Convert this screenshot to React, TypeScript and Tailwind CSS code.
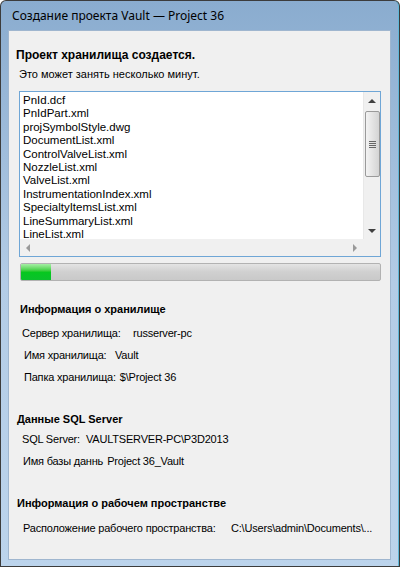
import React from "react";

const files = [
  "PnId.dcf",
  "PnIdPart.xml",
  "projSymbolStyle.dwg",
  "DocumentList.xml",
  "ControlValveList.xml",
  "NozzleList.xml",
  "ValveList.xml",
  "InstrumentationIndex.xml",
  "SpecialtyItemsList.xml",
  "LineSummaryList.xml",
  "LineList.xml",
];

const font = { fontFamily: '"Liberation Sans", Arial, sans-serif' };

function Arrow({ dir }: { dir: "up" | "down" | "left" | "right" }) {
  const pts = {
    up: "0,4 4,0 8,4",
    down: "0,0 8,0 4,4",
    left: "4,0 4,8 0,4",
    right: "0,0 0,8 4,4",
  }[dir];
  const vert = dir === "up" || dir === "down";
  return (
    <svg width={vert ? 8 : 4} height={vert ? 4 : 8} viewBox={vert ? "0 0 8 4" : "0 0 4 8"}>
      <polygon points={pts} fill={vert ? "#404040" : "#9a9a9a"} />
    </svg>
  );
}

function InfoRow({ label, value, w, pl }: { label: string; value: string; w: string; pl: string }) {
  return (
    <div className={`flex h-[22px] items-center whitespace-nowrap text-[11px] tracking-[-0.2px] text-black ${pl}`}>
      <span className={`shrink-0 mr-[4px] ${w}`}>{label}</span>
      <span>{value}</span>
    </div>
  );
}

export default function App() {
  return (
    <div className="w-[400px] h-[567px] bg-[#3c3c3c] p-px rounded-t-[6px]" style={font}>
      <div className="flex h-full flex-col rounded-t-[5px] bg-gradient-to-b from-[#8aaccf] via-[#b3cce6] to-[#bcd4ec] px-[7px] pb-[6px] border-r border-[#5fb7d8]">
        <div className="flex h-[29px] items-center pl-[4px] text-[12px] text-black" style={{ fontFamily: '"Noto Sans", "Open Sans", sans-serif' }}>
          Создание проекта Vault — Project 36
        </div>
        <div className="flex flex-1 flex-col bg-[#f0f0f0] border border-[#9fb6cf]">
          <div className="mt-[16px] pl-[7px] text-[12px] font-bold leading-[16px] text-black">Проект хранилища создается.</div>
          <div className="mt-[3px] pl-[10px] text-[11px] leading-[16px] text-black">Это может занять несколько минут.</div>

          <div className="ml-[10px] mt-[9px] flex h-[166px] w-[362px] flex-col border border-[#6fa6d6] bg-white">
            <div className="flex flex-1 min-h-0">
              <div className="flex-1 pl-[3px] pt-[2px] text-[11.5px] leading-[13.4px] text-black">
                {files.map((f) => (
                  <div key={f}>{f}</div>
                ))}
              </div>
              <div className="flex w-[17px] flex-col items-center bg-[#f0f0f0] border-l border-[#e8e8e8]">
                <div className="flex h-[17px] items-center justify-center">
                  <Arrow dir="up" />
                </div>
                <div className="mt-[2px] flex h-[66px] w-[15px] items-center justify-center rounded-[2px] border border-[#9a9a9a] bg-gradient-to-r from-[#f3f3f3] to-[#d4d4d4]">
                  <div className="flex flex-col gap-[1px]">
                    <div className="h-px w-[7px] bg-[#666]" />
                    <div className="h-px w-[7px] bg-[#666]" />
                    <div className="h-px w-[7px] bg-[#666]" />
                    <div className="h-px w-[7px] bg-[#666]" />
                  </div>
                </div>
                <div className="flex-1" />
                <div className="flex h-[17px] items-center justify-center">
                  <Arrow dir="down" />
                </div>
              </div>
            </div>
            <div className="flex h-[17px]">
              <div className="flex flex-1 items-center justify-between bg-[#f0f0f0] px-[6px]">
                <Arrow dir="left" />
                <Arrow dir="right" />
              </div>
              <div className="w-[17px] bg-[#f0f0f0]" />
            </div>
          </div>

          <div className="ml-[11px] mt-[6px] h-[18px] w-[361px] overflow-hidden rounded-[2px] border border-[#b2b2b2] bg-gradient-to-b from-[#e4e4e4] via-[#d0d0d0] to-[#c9c9c9]">
            <div className="h-full w-[30px] bg-gradient-to-b from-[#a4efa4] via-[#06c81e] to-[#0bc02c]" />
          </div>

          <div className="mt-[20px] pl-[11px] text-[11px] font-bold leading-[16px] text-black">Информация о хранилище</div>
          <div className="mt-[5px]">
            <InfoRow label="Сервер хранилища:" value="russerver-pc" w="min-w-[107px]" pl="pl-[13px]" />
            <InfoRow label="Имя хранилища:" value="Vault" w="min-w-[87px]" pl="pl-[15px]" />
            <InfoRow label="Папка хранилища:" value="$\Project 36" w="min-w-[90px]" pl="pl-[15px]" />
          </div>

          <div className="mt-[23px] pl-[8px] text-[11px] font-bold leading-[16px] text-black">Данные SQL Server</div>
          <div className="mt-[1px]">
            <InfoRow label="SQL Server:" value="VAULTSERVER-PC\P3D2013" w="min-w-[60px]" pl="pl-[13px]" />
            <InfoRow label="Имя базы даннь" value="Project 36_Vault" w="" pl="pl-[14px]" />
          </div>

          <div className="mt-[23px] pl-[8px] text-[11px] font-bold leading-[16px] text-black">Информация о рабочем пространстве</div>
          <div className="mt-[6px]">
            <InfoRow
              label="Расположение рабочего пространства:"
              value="C:\Users\admin\Documents\..."
              w="min-w-[204px]"
              pl="pl-[14px]"
            />
          </div>
        </div>
      </div>
    </div>
  );
}
